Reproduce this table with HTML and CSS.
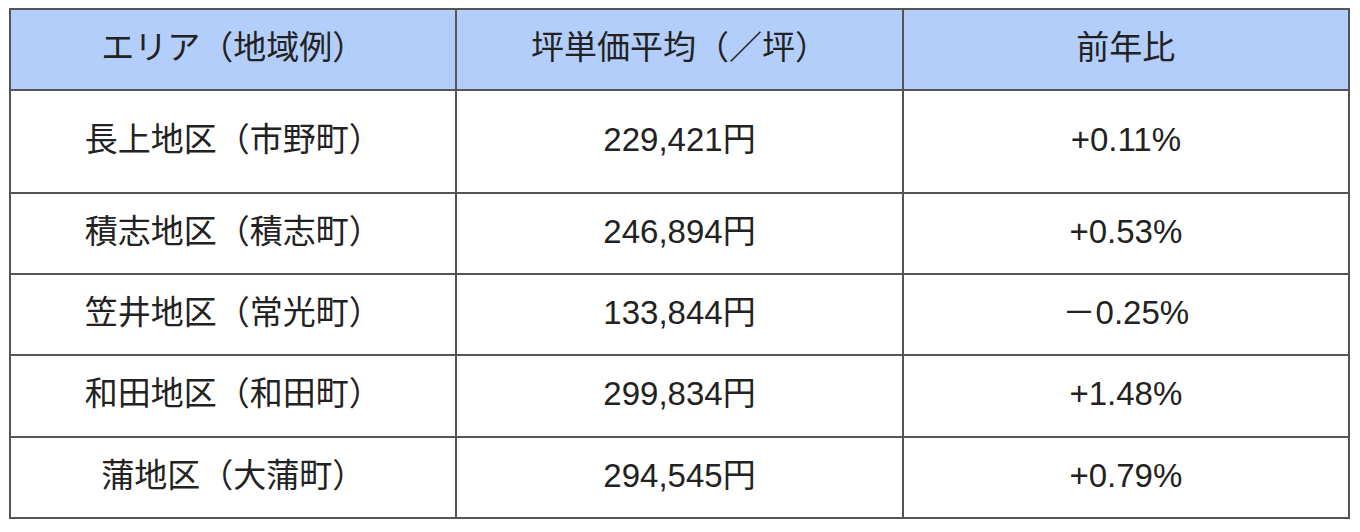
FILE: index.html
```html
<!DOCTYPE html>
<html lang="ja">
<head>
<meta charset="utf-8">
<link rel="stylesheet" href="styles.css">
</head>
<body>
<div class="wrap">
<table class="price-table">
  <thead>
    <tr class="head-row">
      <th>エリア（地域例）</th>
      <th>坪単価平均（／坪）</th>
      <th>前年比</th>
    </tr>
  </thead>
  <tbody>
    <tr class="row-first">
      <td>長上地区（市野町）</td>
      <td>229,421円</td>
      <td>+0.11%</td>
    </tr>
    <tr class="row">
      <td>積志地区（積志町）</td>
      <td>246,894円</td>
      <td>+0.53%</td>
    </tr>
    <tr class="row">
      <td>笠井地区（常光町）</td>
      <td>133,844円</td>
      <td>－0.25%</td>
    </tr>
    <tr class="row row-tall">
      <td>和田地区（和田町）</td>
      <td>299,834円</td>
      <td>+1.48%</td>
    </tr>
    <tr class="row">
      <td>蒲地区（大蒲町）</td>
      <td>294,545円</td>
      <td>+0.79%</td>
    </tr>
  </tbody>
</table>
</div>
</body>
</html>
```
FILE: styles.css
```css
html, body {
  margin: 0;
  padding: 0;
  background: #ffffff;
}
.wrap {
  padding: 8px 0 0 9px;
}
.price-table {
  width: 1341px;
  border-collapse: collapse;
  table-layout: fixed;
  font-family: "Liberation Sans", "Noto Sans CJK JP", sans-serif;
  font-size: 33px;
  line-height: 1.2;
  color: #222222;
}
.price-table th,
.price-table td {
  border: 2px solid #555555;
  text-align: center;
  vertical-align: middle;
  padding: 0 0 4px 0;
  font-weight: normal;
}
.head-row {
  height: 81px;
  background: #b3cefa;
}
.row-first {
  height: 103px;
}
.row {
  height: 81px;
}
.row-tall {
  height: 82px;
}
```
